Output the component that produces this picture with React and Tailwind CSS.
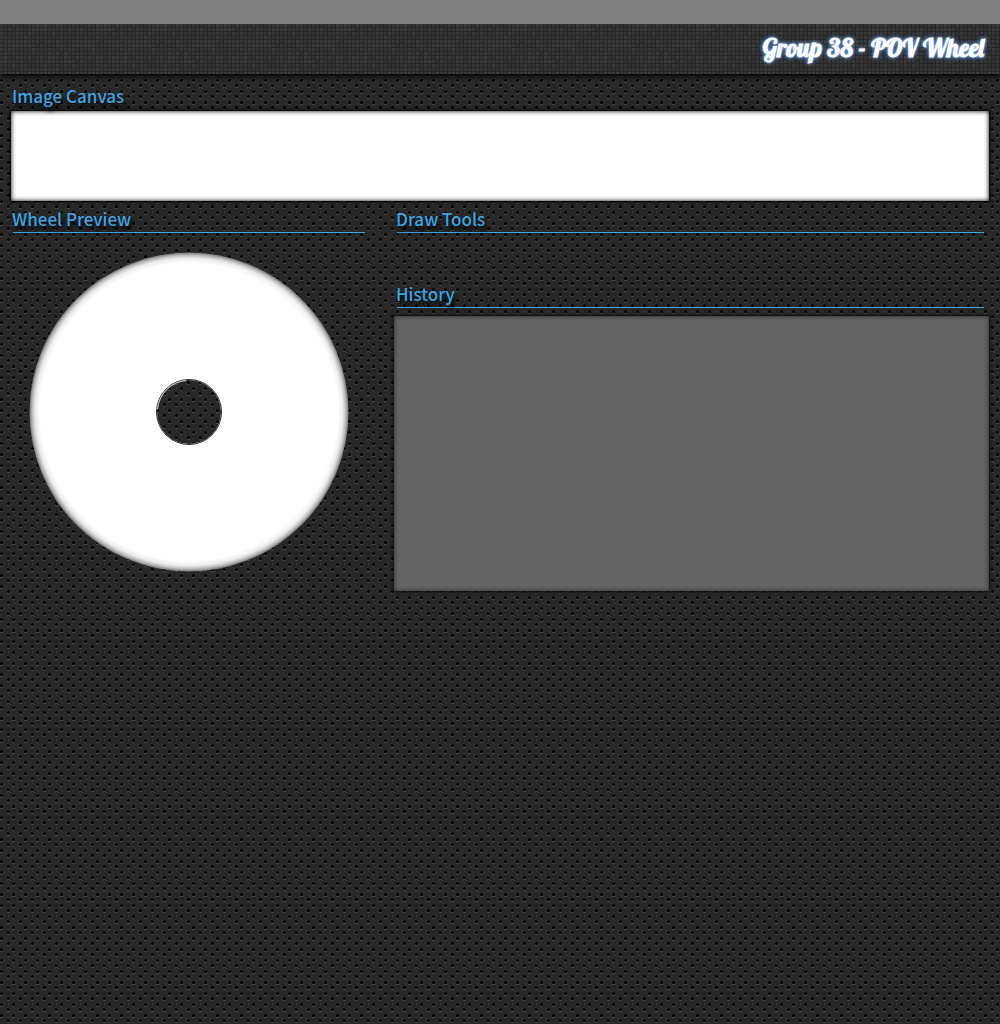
import React from "react";

const shades = [
  "#373737", "#333333", "#3a3a3a", "#343434", "#393939", "#333333", "#363636", "#3b3b3b", "#323232", "#383838",
];

const cells = Array.from({ length: 15 * 13 }, (_, i) => ({
  x: (i % 15) * 4,
  y: Math.floor(i / 15) * 4,
  fill: shades[(i * 7 + ((i * i) % 11)) % shades.length],
}));

function DotTexture() {
  return (
    <svg aria-hidden="true" className="absolute inset-0 -z-10 h-full w-full">
      <defs>
        <pattern id="dots" width="12" height="11" patternUnits="userSpaceOnUse">
          <rect width="12" height="11" fill="#282828" />
          <path d="M0 5h3v1h-3zM7 10h3v1h-3z" fill="#444" />
          <path d="M0 2h3v3h-3zM7 7h3v3h-3z" fill="#1a1a1a" />
          <path d="M0 3h3v1h-3zM1 2h1v3h-1zM7 8h3v1h-3zM8 7h1v3h-1z" fill="#000" />
        </pattern>
      </defs>
      <rect width="100%" height="100%" fill="url(#dots)" />
    </svg>
  );
}

function GridTexture() {
  return (
    <svg aria-hidden="true" className="absolute inset-0 -z-10 h-full w-full">
      <defs>
        <pattern id="cells" width="60" height="52" patternUnits="userSpaceOnUse">
          <rect width="60" height="52" fill="#272727" />
          {cells.map((c) => (
            <rect key={`${c.x}-${c.y}`} x={c.x} y={c.y} width="3" height="3" fill={c.fill} />
          ))}
        </pattern>
      </defs>
      <rect width="100%" height="100%" fill="url(#cells)" />
    </svg>
  );
}

function Heading({ children, ruled = true }) {
  return (
    <>
      <h2 className="ml-1 h-[25px] font-['Noto_Sans_CJK_SC','Noto_Sans',sans-serif] text-[17px] leading-6 font-medium text-[#3fa4e0] [text-shadow:2px_4px_4px_#000]">
        {children}
      </h2>
      {ruled && <div className="mr-2 ml-[5px] h-px bg-[#3fa4e0]" />}
    </>
  );
}

export default function App() {
  return (
    <div className="relative isolate flex min-h-screen flex-col">
      <DotTexture />
      <div className="relative z-10 h-6 bg-[#808080]" />
      <header className="relative isolate flex h-[50px] items-center justify-end px-4 shadow-[0_2px_6px_#000]">
        <GridTexture />
        <h1 className="pb-[3px] font-['Lobster','Liberation_Serif',serif] text-[25px] leading-8 font-bold text-white [text-shadow:0_0_3px_#7db4ff,0_0_5px_#4a7fc8]">
          Group 38 - POV Wheel
        </h1>
      </header>
      <main className="flex flex-col px-2 pt-[10px]">
        <section>
          <Heading ruled={false}>Image Canvas</Heading>
          <div className="mx-[3px] mt-[2px] h-[90px] bg-white shadow-[0_0_3px_1px_#000,inset_0_0_5px_#000]" />
        </section>
        <div className="mt-[6px] grid grid-cols-[365px_1fr] gap-[19px]">
          <section>
            <Heading>Wheel Preview</Heading>
            <svg role="img" aria-label="Wheel preview" viewBox="0 0 320 320" className="mt-[19px] ml-[21px] size-80">
              <defs>
                <radialGradient id="rim" gradientUnits="userSpaceOnUse" cx="160" cy="160" r="160">
                  <stop offset="0.93" stopColor="#fff" />
                  <stop offset="0.96" stopColor="#ececec" />
                  <stop offset="0.98" stopColor="#bcbcbc" />
                  <stop offset="1" stopColor="#666" />
                </radialGradient>
              </defs>
              <path
                fillRule="evenodd"
                fill="url(#rim)"
                d="M160 .5a159.500 159.500 0 1 1 0 319a159.500 159.500 0 1 1 0-319zM160 128a32 32 0 1 0 0 64a32 32 0 1 0 0-64z"
              />
              <circle cx="160" cy="160" r="32.5" fill="none" stroke="#303030" />
              <path d="M128.500 157A31.700 31.700 0 0 1 157 128.500" fill="none" stroke="#fff" strokeWidth="0.8" />
            </svg>
          </section>
          <div>
            <section>
              <Heading>Draw Tools</Heading>
            </section>
            <section className="mt-[49px]">
              <Heading>History</Heading>
              <div className="mr-[3px] ml-[2px] mt-2 h-[275px] bg-[#646464] shadow-[0_0_3px_1px_#111,inset_0_0_4px_#222]" />
            </section>
          </div>
        </div>
      </main>
    </div>
  );
}
